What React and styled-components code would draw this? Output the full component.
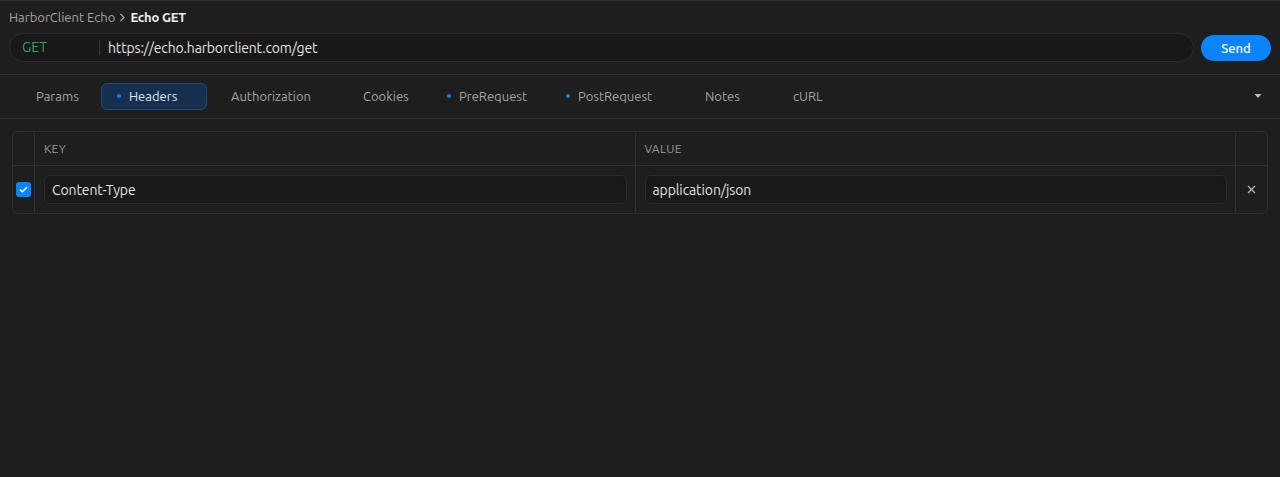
import React, { useState } from "react";
import styled, { createGlobalStyle } from "styled-components";

const GlobalStyle = createGlobalStyle`
  html, body {
    margin: 0;
    padding: 0;
    background: #1e1e1e;
  }
  body {
    font-family: "Ubuntu", "Lato", "Noto Sans", sans-serif;
    color: #d6d6d6;
  }
  * {
    box-sizing: border-box;
  }
`;

// Page shell
const Page = styled.div`
  min-height: 477px;
  background: #1e1e1e;
  border-top: 1px solid #313131;
`;

const RequestHeader = styled.div`
  display: flex;
  flex-direction: column;
  gap: 7px;
  padding: 7px 9px 12px 9px;
  border-bottom: 1px solid #2e2e2e;
`;

const Breadcrumb = styled.div`
  display: flex;
  align-items: center;
  gap: 4px;
  height: 18px;
  font-size: 13px;
  color: #a3a3a3;
`;

const Crumb = styled.span`
  color: ${(p) => (p.$current ? "#ededed" : "#a3a3a3")};
  font-weight: ${(p) => (p.$current ? 700 : 400)};
  letter-spacing: ${(p) => (p.$current ? "-0.2px" : "0")};
`;

const UrlRow = styled.div`
  display: flex;
  align-items: flex-end;
  gap: 7px;
`;

const UrlBar = styled.div`
  flex: 1;
  display: flex;
  align-items: center;
  height: 29px;
  background: #181818;
  border: 1px solid #2b2b2b;
  border-radius: 15px;
  padding-left: 12px;
`;

const Method = styled.span`
  width: 78px;
  font-size: 14px;
  color: #35a05a;
  border-right: 1px solid #383838;
  line-height: 15px;
`;

const UrlText = styled.span`
  padding-left: 8px;
  font-size: 14px;
  letter-spacing: -0.15px;
  color: #e2e2e2;
`;

const SendButton = styled.button`
  width: 70px;
  height: 26px;
  margin-bottom: 1px;
  border: none;
  border-radius: 13px;
  background: #0a84ff;
  color: #ffffff;
  font-family: inherit;
  font-size: 13px;
  font-weight: 500;
  cursor: pointer;
`;

// Tabs
const TabRow = styled.div`
  display: flex;
  align-items: center;
  gap: 8px;
  height: 44px;
  padding: 0 18px 1px 20px;
  border-bottom: 1px solid #2e2e2e;
`;

const Tab = styled.button`
  display: flex;
  align-items: center;
  gap: 8px;
  width: ${(p) => p.$w}px;
  height: 27px;
  padding: 0 0 0 15px;
  border-radius: 6px;
  border: 1px solid ${(p) => (p.$active ? "#1f4a78" : "transparent")};
  background: ${(p) => (p.$active ? "#15304f" : "transparent")};
  color: ${(p) => (p.$active ? "#dfe7f0" : "#a2a2a2")};
  font-family: inherit;
  font-size: 13px;
  text-align: left;
  cursor: pointer;
`;

const Dot = styled.span`
  width: 4px;
  height: 4px;
  border-radius: 50%;
  background: #0a84ff;
  flex: none;
`;

const TabSpacer = styled.div`
  flex: 1;
`;

const Caret = styled.svg`
  width: 8px;
  height: 6px;
  flex: none;
`;

// Headers table
const TableWrap = styled.div`
  padding: 12px 12px;
`;

const Table = styled.div`
  display: grid;
  grid-template-columns: 21px 1fr 1fr 32px;
  border: 1px solid #2e2e2e;
  border-radius: 6px;
  overflow: hidden;
`;

const Cell = styled.div`
  display: flex;
  align-items: center;
  justify-content: ${(p) => (p.$center ? "center" : "flex-start")};
  height: ${(p) => (p.$head ? 33 : 48)}px;
  padding: ${(p) => (p.$center ? "0" : "0 8px 0 9px")};
  border-left: ${(p) => (p.$first ? "none" : "1px solid #2e2e2e")};
  border-top: ${(p) => (p.$head ? "none" : "1px solid #2e2e2e")};
`;

const HeadLabel = styled.span`
  font-size: 12px;
  letter-spacing: 0.3px;
  color: #999999;
  text-transform: uppercase;
`;

const Field = styled.div`
  flex: 1;
  display: flex;
  align-items: center;
  height: 29px;
  padding: 0 7px;
  background: #191919;
  border: 1px solid #2b2b2b;
  border-radius: 6px;
  font-size: 14px;
  letter-spacing: -0.1px;
  color: #e0e0e0;
`;

const Checkbox = styled.span`
  display: flex;
  align-items: center;
  justify-content: center;
  width: 15px;
  height: 15px;
  border-radius: 3px;
  background: #0a84ff;
`;

const RemoveButton = styled.button`
  display: flex;
  align-items: center;
  justify-content: center;
  padding: 0;
  width: 16px;
  height: 16px;
  border: none;
  background: transparent;
  cursor: pointer;
`;

const tabs = [
  { name: "Params", w: 73 },
  { name: "Headers", w: 106, dot: true },
  { name: "Authorization", w: 124 },
  { name: "Cookies", w: 76 },
  { name: "PreRequest", w: 111, dot: true },
  { name: "PostRequest", w: 131, dot: true },
  { name: "Notes", w: 80 },
  { name: "cURL", w: 80 },
];

const headers = [{ key: "Content-Type", value: "application/json", on: true }];

const App = () => {
  const [activeTab, setActiveTab] = useState("Headers");

  return (
    <Page>
      <GlobalStyle />
      <RequestHeader>
        <Breadcrumb>
          <Crumb>HarborClient Echo</Crumb>
          <svg width="7" height="9" viewBox="0 0 7 9">
            <path d="M1.5 1l3.5 3.5L1.5 8" fill="none" stroke="#a3a3a3" strokeWidth="1.3" />
          </svg>
          <Crumb $current>Echo GET</Crumb>
        </Breadcrumb>
        <UrlRow>
          <UrlBar>
            <Method>GET</Method>
            <UrlText>https://echo.harborclient.com/get</UrlText>
          </UrlBar>
          <SendButton>Send</SendButton>
        </UrlRow>
      </RequestHeader>

      <TabRow>
        {tabs.map((t) => (
          <Tab
            key={t.name}
            $w={t.w}
            $active={activeTab === t.name}
            onClick={() => setActiveTab(t.name)}
          >
            {t.dot && <Dot />}
            {t.name}
          </Tab>
        ))}
        <TabSpacer />
        <Caret viewBox="0 0 8 6">
          <path d="M0.5 1h7L4 5z" fill="#bdbdbd" />
        </Caret>
      </TabRow>

      <TableWrap>
        <Table>
          <Cell $head $first $center />
          <Cell $head>
            <HeadLabel>Key</HeadLabel>
          </Cell>
          <Cell $head>
            <HeadLabel>Value</HeadLabel>
          </Cell>
          <Cell $head $center />
          {headers.map((h) => (
            <React.Fragment key={h.key}>
              <Cell $first $center>
                <Checkbox>
                  <svg width="9" height="7" viewBox="0 0 9 7">
                    <path d="M1 3.6l2.3 2.2L8 1.2" fill="none" stroke="#fff" strokeWidth="1.5" />
                  </svg>
                </Checkbox>
              </Cell>
              <Cell>
                <Field>{h.key}</Field>
              </Cell>
              <Cell>
                <Field>{h.value}</Field>
              </Cell>
              <Cell $center>
                <RemoveButton>
                  <svg width="9" height="9" viewBox="0 0 9 9">
                    <path d="M1 1l7 7M8 1L1 8" stroke="#b0b0b0" strokeWidth="1.4" />
                  </svg>
                </RemoveButton>
              </Cell>
            </React.Fragment>
          ))}
        </Table>
      </TableWrap>
    </Page>
  );
};

export default App;
